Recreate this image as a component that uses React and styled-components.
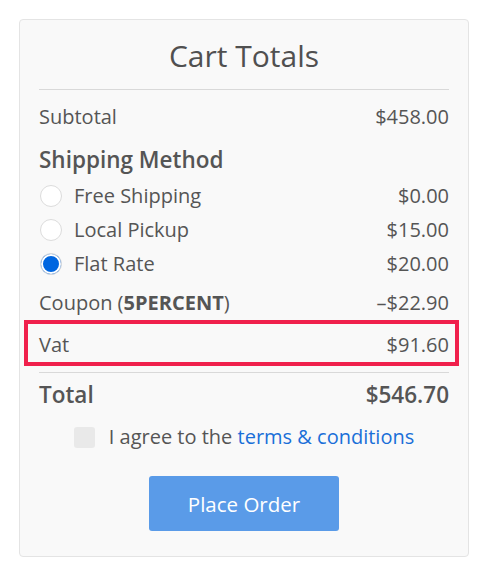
import React, { useState } from 'react';
import styled, { createGlobalStyle } from 'styled-components';

const GlobalStyle = createGlobalStyle`
    body {
        margin: 0;
        background: #fff;
        font-family: "Open Sans", "Noto Sans", sans-serif;
        color: #555;
    }
`

const shipping = [
    { id: 'free', label: 'Free Shipping', price: 0 },
    { id: 'local', label: 'Local Pickup', price: 15 },
    { id: 'flat', label: 'Flat Rate', price: 20 },
]

const money = n => `$${n.toFixed(2)}`

const App = () => {
    const [method, setMethod] = useState('flat')
    const [agree, setAgree] = useState(false)

    return (
        <StPage>
            <GlobalStyle />
            <StCard>
                <StTitle>Cart Totals</StTitle>
                <StLine gap={9} />
                <StRow>
                    <span>Subtotal</span>
                    <span>$458.00</span>
                </StRow>
                <StHeading>Shipping Method</StHeading>
                <StOptions>
                    {shipping.map(opt => (
                        <StOption key={opt.id} onClick={() => setMethod(opt.id)}>
                            <StLabel>
                                <StRadio checked={method === opt.id} />
                                {opt.label}
                            </StLabel>
                            <span>{money(opt.price)}</span>
                        </StOption>
                    ))}
                </StOptions>
                <StRow>
                    <span>Coupon (<b>5PERCENT</b>)</span>
                    <span>–$22.90</span>
                </StRow>
                <StRow highlight>
                    <span>Vat</span>
                    <span>$91.60</span>
                </StRow>
                <StLine gap={6} />
                <StTotal>
                    <span>Total</span>
                    <span>$546.70</span>
                </StTotal>
                <StAgree onClick={() => setAgree(a => !a)}>
                    <StCheck checked={agree} />
                    <span>I agree to the <a href="#terms" onClick={e => e.preventDefault()}>terms &amp; conditions</a></span>
                </StAgree>
                <StButton>Place Order</StButton>
            </StCard>
        </StPage>
    );
};

const StPage = styled.div`
    padding: 19px;
`

const StCard = styled.div`
    width: 450px;
    box-sizing: border-box;
    background: #f9f9f9;
    border: 1px solid #e4e4e4;
    border-radius: 4px;
    padding: 12px 19px 25px 19px;
    display: flex;
    flex-direction: column;
`

const StTitle = styled.h2`
    margin: 0;
    text-align: center;
    font-size: 30px;
    font-weight: 400;
    line-height: 48px;
    color: #505050;
`

const StLine = styled.div`
    height: 1px;
    background: #d9d9d9;
    margin-top: ${props => props.gap}px;
`

const StRow = styled.div`
    position: relative;
    display: flex;
    justify-content: space-between;
    font-size: 20px;
    line-height: 24px;
    padding: 15px 0 0;
    ${props => props.highlight && `
        padding: 13px 0 9px;
        margin-top: 5px;
        &::after {
            content: '';
            position: absolute;
            left: -15px;
            right: -10px;
            top: 0;
            bottom: 0;
            border: 4px solid #f0204c;
        }
    `}
    b {
        font-weight: 700;
    }
`

const StHeading = styled.h3`
    margin: 17px 0 0;
    font-size: 22.5px;
    font-weight: 600;
    line-height: 28px;
`

const StOptions = styled.div`
    display: flex;
    flex-direction: column;
    gap: 10px;
    margin-top: 10px;
`

const StOption = styled.div`
    display: flex;
    justify-content: space-between;
    font-size: 20px;
    line-height: 24px;
    cursor: pointer;
`

const StLabel = styled.span`
    display: flex;
    align-items: center;
    gap: 12px;
`

const StRadio = styled.span`
    width: 22px;
    height: 22px;
    box-sizing: border-box;
    border-radius: 50%;
    border: 1px solid #dcdcdc;
    background: ${props => props.checked ? '#0066e0' : '#fff'};
    box-shadow: ${props => props.checked ? 'inset 0 0 0 2px #fff' : 'none'};
    margin-left: 1px;
`

const StTotal = styled.div`
    display: flex;
    justify-content: space-between;
    font-size: 22.5px;
    font-weight: 600;
    line-height: 30px;
    margin-top: 7px;
`

const StAgree = styled.label`
    display: flex;
    align-items: center;
    justify-content: center;
    gap: 14px;
    font-size: 20px;
    line-height: 24px;
    margin-top: 15px;
    cursor: pointer;
    a {
        color: #1a6fd8;
        text-decoration: none;
    }
`

const StCheck = styled.span`
    width: 21px;
    height: 21px;
    border-radius: 3px;
    background: ${props => props.checked ? '#1a6fd8' : '#e9e9e9'};
`

const StButton = styled.button`
    align-self: center;
    margin-top: 27px;
    width: 190px;
    height: 55px;
    border: none;
    border-radius: 3px;
    background: #5a9be8;
    color: #fff;
    font-family: "Open Sans", "Noto Sans", sans-serif;
    font-size: 20.5px;
    cursor: pointer;
`

export default App;
